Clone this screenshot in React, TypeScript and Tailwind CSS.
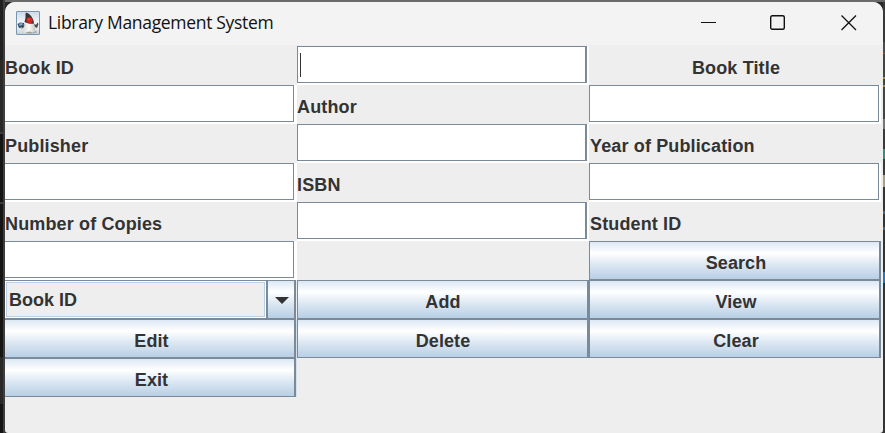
type Column = 'left' | 'middle' | 'right';

function Label({ text, centered = false, inset = false }: { text: string; centered?: boolean; inset?: boolean }) {
  return (
    <div className={`flex items-center pt-[5px] ${centered ? 'justify-center pl-[2px]' : ''} ${inset ? 'pl-[1px]' : ''}`}>
      <span className="text-[18px] leading-[20px] tracking-[0.14px]">{text}</span>
    </div>
  );
}

const fieldStyles: Record<Column, string> = {
  left: 'w-[289px] border-r',
  middle: 'w-[290px] border-l border-r-2',
  right: 'w-[290px] border-x',
};

function Field({ column, focused = false }: { column: Column; focused?: boolean }) {
  return (
    <div className="bg-white">
      <div className={`flex h-[37px] items-center border-y border-[#7a8a99] pl-[2px] ${fieldStyles[column]}`}>
        {focused && <span className="h-6 w-px bg-[#333]" />}
      </div>
    </div>
  );
}

const buttonStyles: Record<Column, string> = {
  left: 'w-[291px] border-r-2 pl-[4px]',
  middle: 'w-[292px] border-l border-r-2 pl-px',
  right: 'w-[292px] border-l border-r-2 pl-[3px]',
};

function Button({ text, column }: { text: string; column: Column }) {
  return (
    <div className="flex border-r border-[#d5e0ea]">
      <button
        className={`h-[39px] shrink-0 border-y border-[#7a8a99] bg-[linear-gradient(#dde8f3_0%,#ffffff_30%,#dde8f3_60%,#b8cfe5_100%)] pt-[5px] text-[18px] leading-[20px] tracking-[0.1px] ${buttonStyles[column]}`}
      >
        {text}
      </button>
    </div>
  );
}

function Combo() {
  return (
    <div className="flex">
      <div className="flex h-[39px] w-[291px] border-y border-r-2 border-[#7a8a99]">
        <div className="flex w-[261px] bg-white p-px">
          <div className="flex flex-1 items-center border border-[#b8cfe5] bg-[#eee] pl-[2px] text-[18px] leading-[20px]">
            <span className="pt-px">Book ID</span>
          </div>
        </div>
        <div className="flex flex-1 items-center justify-center border-l-2 border-[#7a8a99] bg-[linear-gradient(#dde8f3_0%,#ffffff_30%,#dde8f3_60%,#b8cfe5_100%)]">
          <svg width="14" height="7" viewBox="0 0 14 7" className="mt-[2px] ml-[1px]">
            <path d="M0 0H14L7 7Z" fill="#333" />
          </svg>
        </div>
      </div>
    </div>
  );
}

function DukeIcon() {
  return (
    <svg width="24" height="24" viewBox="0 0 24 24" className="-mt-[2px]">
      <defs>
        <linearGradient id="tile" x2="0" y2="1">
          <stop stopColor="#ced9e5" />
          <stop offset=".55" stopColor="#f8fafc" />
          <stop offset="1" stopColor="#c6d0da" />
        </linearGradient>
        <linearGradient id="body">
          <stop stopColor="#d5d5d2" />
          <stop offset=".5" stopColor="#fafaf8" />
          <stop offset="1" stopColor="#c4c4c1" />
        </linearGradient>
      </defs>
      <rect x=".5" y=".5" width="23" height="23" rx=".5" fill="url(#tile)" stroke="#7895b2" />
      <ellipse cx="14" cy="21" rx="7" ry="1.5" fill="#9c9f9f" />
      <path d="M1.5 13L4 11.5 8 12v4l-5 1z" fill="#3c4852" />
      <path d="M3 12.5l3.5-.4v2L3.5 15z" fill="#70b6dc" />
      <path d="M9 10Q7 14 7.5 18L6.5 21Q9 23 11 21Q14 20 16 21.5Q18 22 19.5 20Q19 14 17 9Z" fill="url(#body)" />
      <path d="M10 1.5Q13 2 15.5 5.5Q17.5 8 18 12.5Q13 13.5 8.5 11Q10 7 9.5 3Z" fill="#363636" />
      <path d="M18 12.5L20 14l1.5-2.5L22.5 13 21 17l-2-1z" fill="#454545" />
      <path d="M8.5 13L5 18.5 8 16z" fill="#454545" />
      <circle cx="13.5" cy="9.3" r="3.1" fill="#d9221c" />
      <circle cx="12.8" cy="8.4" r="1" fill="#f5503e" />
    </svg>
  );
}

function TitleBar() {
  return (
    <header className="flex h-[43px] items-center bg-[#f3f3f3] pr-[26px] pl-[11px]">
      <DukeIcon />
      <h1 className="-mt-[3px] ml-[8px] flex-1 whitespace-nowrap font-['Open_Sans','Noto_Sans',sans-serif] text-[17.5px] leading-[24px] font-normal tracking-[-0.32px] text-[#111]">
        Library Management System
      </h1>
      <div className="flex gap-[54px] pb-px">
        <svg width="16" height="16" viewBox="0 0 16 16" fill="none" stroke="#111">
          <path d="M0 7.5H15" />
        </svg>
        <svg width="16" height="16" viewBox="0 0 16 16" fill="none" stroke="#111" strokeWidth="1.4" className="-ml-px">
          <rect x=".7" y=".7" width="13.6" height="13.6" rx="1.5" />
        </svg>
        <svg width="16" height="16" viewBox="0 0 16 16" fill="none" stroke="#111" strokeWidth="1.3" className="ml-px">
          <path d="M.5 .5L15 15M15 .5L.5 15" />
        </svg>
      </div>
    </header>
  );
}

export default function App() {
  return (
    <div className="flex h-[433px] w-[885px] overflow-hidden bg-[#1b1b1b]">
      <div className="h-full w-[3px] bg-[linear-gradient(#202020_0_60px,#292929_60px_132px,#3c3c3c_132px_134px,#151515_134px_202px,#3c3c3c_202px_204px,#151515_204px_357px,#292929_357px_404px,#151515_404px)]" />
      <div className="h-full w-[2px] bg-[#3e3e3e]" />
      <div className="flex w-[878px] flex-col bg-[linear-gradient(#6a6a6a_0_2px,#292929_2px)]">
        <div className="mt-[2px] flex-1 overflow-hidden rounded-t-[10px] rounded-b-[3px] bg-[#eee]">
          <TitleBar />
          <main className="mt-px grid auto-rows-[39px] grid-cols-[292px_292px_292px] font-['Liberation_Sans',Arial,sans-serif] font-bold text-[#333]">
            <Label text="Book ID" />
            <Field column="middle" focused />
            <Label text="Book Title" centered />
            <Field column="left" />
            <Label text="Author" />
            <Field column="right" />
            <Label text="Publisher" />
            <Field column="middle" />
            <Label text="Year of Publication" inset />
            <Field column="left" />
            <Label text="ISBN" />
            <Field column="right" />
            <Label text="Number of Copies" />
            <Field column="middle" />
            <Label text="Student ID" inset />
            <Field column="left" />
            <div />
            <Button text="Search" column="right" />
            <Combo />
            <Button text="Add" column="middle" />
            <Button text="View" column="right" />
            <Button text="Edit" column="left" />
            <Button text="Delete" column="middle" />
            <Button text="Clear" column="right" />
            <Button text="Exit" column="left" />
          </main>
        </div>
      </div>
      <div className="h-full w-[2px] bg-[linear-gradient(#6a6a6a_0_2px,#393939_2px_42px,#4c4c4c_42px_53px,#376d94_53px_54px,#444_54px_77px,#a58f35_77px_79px,#444_79px_85px,#a58f35_85px_87px,#444_87px_119px,#777_119px_129px,#3a3a3a_129px_149px,#3d8c7c_149px_159px,#3a3a3a_159px_175px,#aaa17c_175px_187px,#343434_187px_211px,#286da8_211px_214px,#343434_214px_227px,#286da8_227px_230px,#343434_230px_272px,#2676b8_272px_283px,#343434_283px)]" />
    </div>
  );
}
